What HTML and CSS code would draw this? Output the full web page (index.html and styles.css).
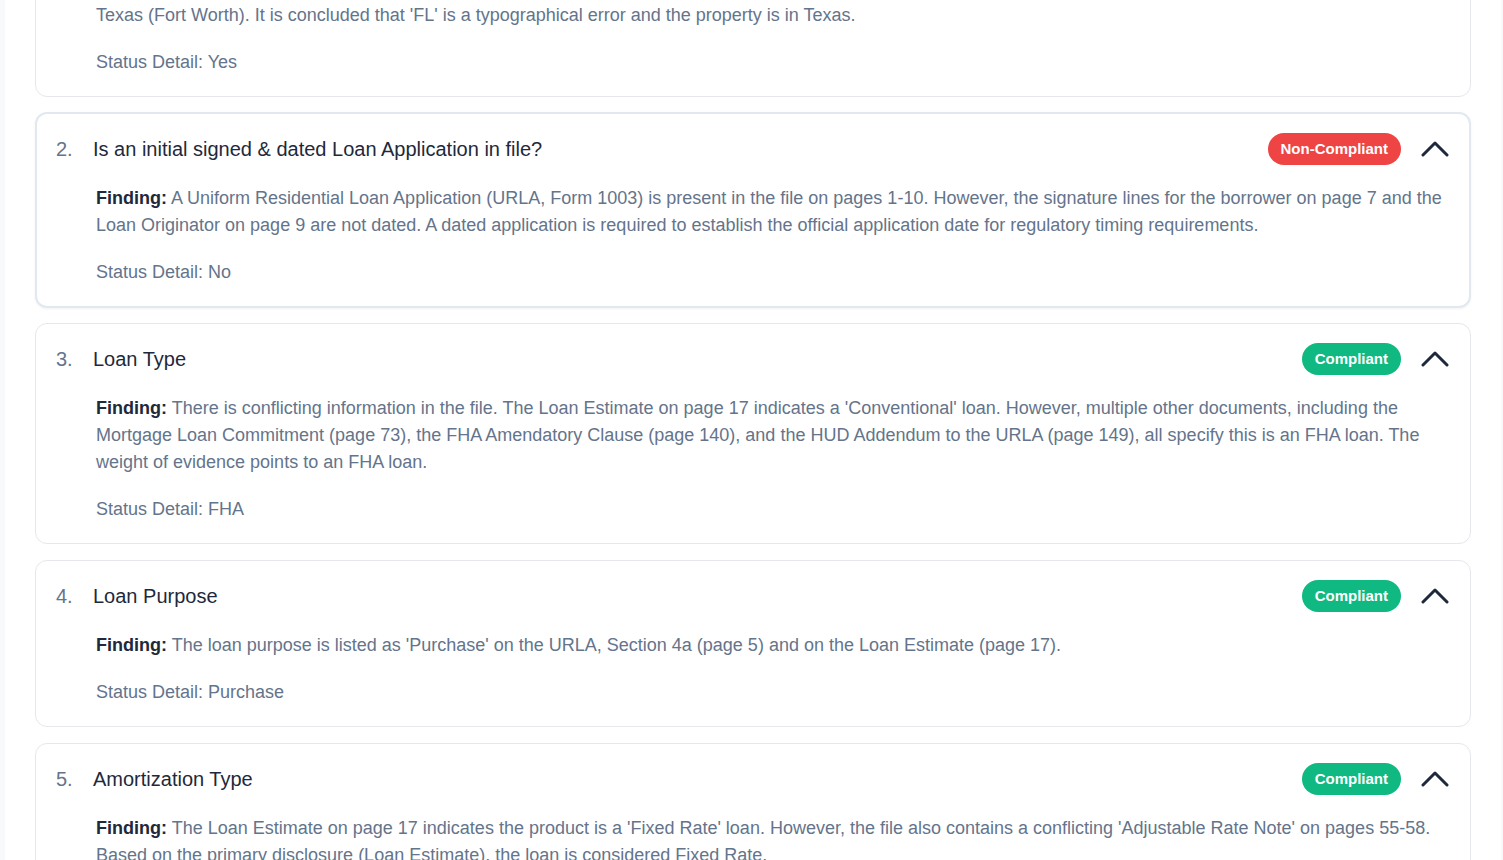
FILE: index.html
```html
<!DOCTYPE html>
<html lang="en">
<head>
<meta charset="utf-8">
<title>Compliance Review</title>
<link rel="stylesheet" href="styles.css">
</head>
<body>
<main class="panel">
  <div class="list">
    <section class="card">
      <div class="card-head">
        <span class="num">1.</span>
        <h3 class="title">Property State</h3>
        <span class="badge ok">Compliant</span>
        <button class="toggle" aria-label="Collapse"><svg width="28" height="16" viewBox="0 0 28 16"><polyline points="2,14 14,2 26,14" fill="none" stroke="#1e293b" stroke-width="3" stroke-linecap="round" stroke-linejoin="round"/></svg></button>
      </div>
      <div class="card-body">
        <p class="finding"><b>Finding:</b> The Note lists the property state as 'FL', while the appraisal, title commitment and all other documents show the property in<br>Texas (Fort Worth). It is concluded that 'FL' is a typographical error and the property is in Texas.</p>
        <p class="status">Status Detail: Yes</p>
      </div>
    </section>

    <section class="card active">
      <div class="card-head">
        <span class="num">2.</span>
        <h3 class="title">Is an initial signed &amp; dated Loan Application in file?</h3>
        <span class="badge bad">Non-Compliant</span>
        <button class="toggle" aria-label="Collapse"><svg width="28" height="16" viewBox="0 0 28 16"><polyline points="2,14 14,2 26,14" fill="none" stroke="#1e293b" stroke-width="3" stroke-linecap="round" stroke-linejoin="round"/></svg></button>
      </div>
      <div class="card-body">
        <p class="finding"><b>Finding:</b> A Uniform Residential Loan Application (URLA, Form 1003) is present in the file on pages 1-10. However, the signature lines for the borrower on page 7 and the Loan Originator on page 9 are not dated. A dated application is required to establish the official application date for regulatory timing requirements.</p>
        <p class="status">Status Detail: No</p>
      </div>
    </section>

    <section class="card">
      <div class="card-head">
        <span class="num">3.</span>
        <h3 class="title">Loan Type</h3>
        <span class="badge ok">Compliant</span>
        <button class="toggle" aria-label="Collapse"><svg width="28" height="16" viewBox="0 0 28 16"><polyline points="2,14 14,2 26,14" fill="none" stroke="#1e293b" stroke-width="3" stroke-linecap="round" stroke-linejoin="round"/></svg></button>
      </div>
      <div class="card-body">
        <p class="finding"><b>Finding:</b> There is conflicting information in the file. The Loan Estimate on page 17 indicates a 'Conventional' loan. However, multiple other documents, including the Mortgage Loan Commitment (page 73), the FHA Amendatory Clause (page 140), and the HUD Addendum to the URLA (page 149), all specify this is an FHA loan. The weight of evidence points to an FHA loan.</p>
        <p class="status">Status Detail: FHA</p>
      </div>
    </section>

    <section class="card">
      <div class="card-head">
        <span class="num">4.</span>
        <h3 class="title">Loan Purpose</h3>
        <span class="badge ok">Compliant</span>
        <button class="toggle" aria-label="Collapse"><svg width="28" height="16" viewBox="0 0 28 16"><polyline points="2,14 14,2 26,14" fill="none" stroke="#1e293b" stroke-width="3" stroke-linecap="round" stroke-linejoin="round"/></svg></button>
      </div>
      <div class="card-body">
        <p class="finding"><b>Finding:</b> The loan purpose is listed as 'Purchase' on the URLA, Section 4a (page 5) and on the Loan Estimate (page 17).</p>
        <p class="status">Status Detail: Purchase</p>
      </div>
    </section>

    <section class="card">
      <div class="card-head">
        <span class="num">5.</span>
        <h3 class="title">Amortization Type</h3>
        <span class="badge ok">Compliant</span>
        <button class="toggle" aria-label="Collapse"><svg width="28" height="16" viewBox="0 0 28 16"><polyline points="2,14 14,2 26,14" fill="none" stroke="#1e293b" stroke-width="3" stroke-linecap="round" stroke-linejoin="round"/></svg></button>
      </div>
      <div class="card-body">
        <p class="finding"><b>Finding:</b> The Loan Estimate on page 17 indicates the product is a 'Fixed Rate' loan. However, the file also contains a conflicting 'Adjustable Rate Note' on pages 55-58. Based on the primary disclosure (Loan Estimate), the loan is considered Fixed Rate.</p>
        <p class="status">Status Detail: Fixed Rate</p>
      </div>
    </section>
  </div>
</main>
</body>
</html>
```

FILE: styles.css
```css
html, body {
  margin: 0;
  padding: 0;
  height: 100%;
  overflow: hidden;
}

body {
  background: #f8f9fb;
  font-family: "Liberation Sans", Arial, sans-serif;
  color: #1e293b;
}

.panel {
  margin-left: 5px;
  width: 1496px;
  min-height: 100%;
  background: #ffffff;
  padding: 0 30px;
  box-sizing: border-box;
}

.list {
  display: flex;
  flex-direction: column;
  gap: 16px;
  margin-top: -97px;
}

.card {
  border: 1px solid #e5e7eb;
  border-radius: 12px;
  background: #fff;
  padding: 19px 20px 20px;
}

.card.active {
  margin: -1px 0 -1px;
  border: 2px solid #e2e8f0;
  padding: 19px 19px 20px;
  box-shadow: 0 1px 3px rgba(15, 23, 42, 0.05);
}

.card-head {
  display: flex;
  align-items: center;
  height: 32px;
}

.num {
  width: 37px;
  flex: none;
  font-size: 20px;
  color: #64748b;
}

.title {
  flex: 1;
  margin: 0;
  font-size: 20px;
  font-weight: 400;
  color: #1e293b;
}

.badge {
  flex: none;
  height: 32px;
  line-height: 32px;
  padding: 0 13px;
  border-radius: 16px;
  font-size: 15px;
  font-weight: 700;
  color: #fff;
}

.badge.ok { background: #10b981; }
.badge.bad { background: #ef4444; }

.toggle {
  flex: none;
  margin-left: 20px;
  margin-right: 1px;
  padding: 0;
  border: 0;
  background: none;
  width: 28px;
  height: 16px;
  display: flex;
}

.card-body {
  padding-left: 40px;
  margin-top: 20px;
}

.finding, .status {
  margin: 0;
  font-size: 18px;
  line-height: 27px;
  color: #64748b;
}

.finding b {
  color: #1e293b;
  font-weight: 700;
}

.status {
  margin-top: 20px;
}
```
